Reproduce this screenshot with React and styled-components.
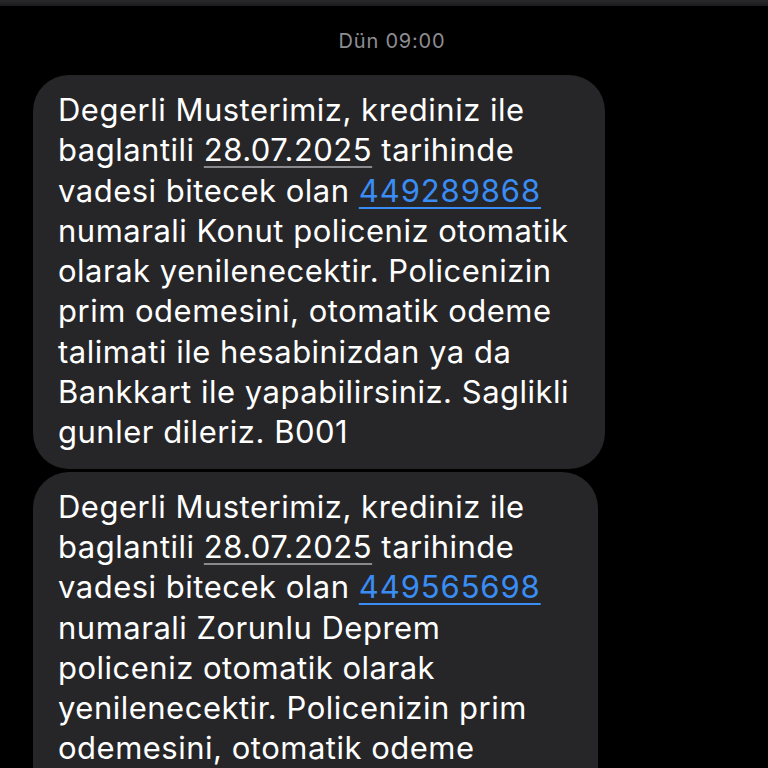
import React from "react";
import styled, { createGlobalStyle } from "styled-components";

const GlobalStyle = createGlobalStyle`
  html, body {
    margin: 0;
    padding: 0;
    background: #000;
  }
  body {
    font-family: Inter, "Noto Sans", "Liberation Sans", sans-serif;
    -webkit-font-smoothing: antialiased;
  }
`;

const Screen = styled.main`
  width: 768px;
  height: 768px;
  overflow: hidden;
  background: #000;
  display: flex;
  flex-direction: column;
`;

const TopEdge = styled.div`
  height: 6px;
  flex-shrink: 0;
  background: linear-gradient(#2a2a2c, #1a1a1c);
`;

const Stamp = styled.div`
  padding: 21px 0 0 16px;
  height: 47px;
  box-sizing: border-box;
  text-align: center;
  color: #8d8d92;
  font-size: 20px;
  line-height: 28px;
  letter-spacing: 0.8px;
`;

const Thread = styled.section`
  display: flex;
  flex-direction: column;
  align-items: flex-start;
  gap: 3px;
  padding: 22px 0 0 33px;
`;

const Bubble = styled.div`
  width: ${(p) => p.$width}px;
  box-sizing: border-box;
  background: #262628;
  color: #fff;
  border-radius: 36px;
  padding: 15px 16px 16px 25px;
  font-size: 31px;
  line-height: 40.3px;
  letter-spacing: 0.5px;
  white-space: nowrap;
`;

const Line = styled.div``;

const DateLink = styled.span`
  text-decoration: underline;
  text-decoration-color: #8a8a8e;
  text-decoration-thickness: 1.5px;
  text-underline-offset: 5px;
`;

const NumberLink = styled.span`
  color: #3a8df5;
  letter-spacing: 0.9px;
  text-decoration: underline;
  text-decoration-thickness: 1.5px;
  text-underline-offset: 5px;
`;

const Message = ({ width, number, lines }) => (
  <Bubble $width={width}>
    <Line>Degerli Musterimiz, krediniz ile</Line>
    <Line>
      baglantili <DateLink>28.07.2025</DateLink> tarihinde
    </Line>
    <Line>
      vadesi bitecek olan <NumberLink>{number}</NumberLink>
    </Line>
    {lines.map((l) => (
      <Line key={l}>{l}</Line>
    ))}
  </Bubble>
);

export default function App() {
  return (
    <>
      <GlobalStyle />
      <Screen>
        <TopEdge />
        <Stamp>Dün 09:00</Stamp>
        <Thread>
          <Message
            width={572}
            number="449289868"
            lines={[
              "numarali Konut policeniz otomatik",
              "olarak yenilenecektir. Policenizin",
              "prim odemesini, otomatik odeme",
              "talimati ile hesabinizdan ya da",
              "Bankkart ile yapabilirsiniz. Saglikli",
              "gunler dileriz. B001",
            ]}
          />
          <Message
            width={565}
            number="449565698"
            lines={[
              "numarali Zorunlu Deprem",
              "policeniz otomatik olarak",
              "yenilenecektir. Policenizin prim",
              "odemesini, otomatik odeme",
              "talimati ile hesabinizdan ya da",
            ]}
          />
        </Thread>
      </Screen>
    </>
  );
}
